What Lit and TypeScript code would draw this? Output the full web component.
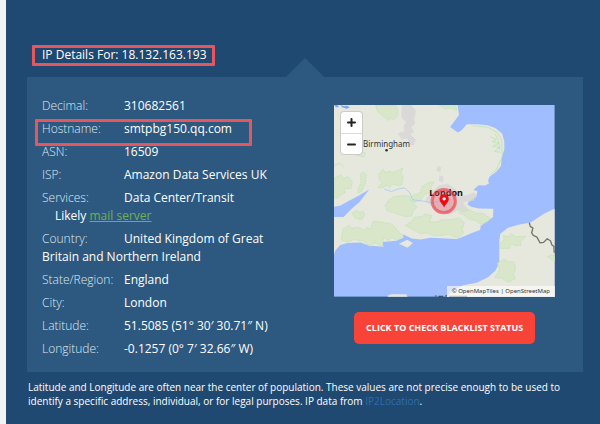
import { LitElement, html, css, svg, nothing } from "lit";
import { customElement } from "lit/decorators.js";

interface Detail {
  label: string;
  value: string;
  note?: boolean;
  marked?: boolean;
}

const details: Detail[] = [
  { label: "Decimal:", value: "310682561" },
  { label: "Hostname:", value: "smtpbg150.qq.com", marked: true },
  { label: "ASN:", value: "16509" },
  { label: "ISP:", value: "Amazon Data Services UK" },
  { label: "Services:", value: "Data Center/Transit", note: true },
  { label: "Country:", value: "United Kingdom of Great Britain and Northern Ireland" },
  { label: "State/Region:", value: "England" },
  { label: "City:", value: "London" },
  { label: "Latitude:", value: "51.5085 (51° 30′ 30.71″ N)" },
  { label: "Longitude:", value: "-0.1257 (0° 7′ 32.66″ W)" },
];

const woods = [
  "M137 15 L141 32 L155 45 L165 52 L176 62 L184 54 L190 60 L203 48 L204 32 L198 15Z",
  "M328 15 L345 27 L362 24 L381 31 L378 15Z",
  "M147 222 L160 208 L166 219 L181 213 L187 219 L219 205 L212 222 L220 229 L216 253 L204 257 L190 252 L180 263 L172 256 L157 264 L145 263 L156 248 L147 238Z",
  "M92 222 L101 217 L109 224 L107 246 L96 273 L85 280 L84 266 L93 250Z",
  "M12 236 L33 224 L40 236 L54 230 L67 246 L63 265 L43 267 L46 279 L33 285 L22 293 L12 297Z",
  "M166 317 L174 303 L192 290 L225 287 L252 294 L261 303 L247 310 L263 322 L250 333 L246 349 L225 350 L195 340 L172 333Z",
  "M240 300 L248 287 L270 280 L278 259 L302 246 L313 247 L303 263 L307 273 L284 285 L272 301 L257 307Z",
  "M226 377 L246 366 L253 353 L278 350 L284 342 L306 348 L298 366 L320 367 L336 360 L364 359 L389 355 L404 370 L397 390 L402 399 L385 414 L355 404 L317 409 L291 400 L271 402 L251 390Z",
  "M383 325 L398 336 L418 330 L444 342 L456 339 L481 355 L474 365 L454 374 L438 362 L417 358 L403 345 L390 341Z",
  "M35 408 L39 388 L58 377 L64 386 L84 382 L101 391 L112 383 L121 389 L131 364 L154 367 L183 372 L197 383 L207 397 L220 409 L204 421 L183 413 L176 423 L161 412 L157 441 L133 428 L125 440 L116 437 L100 424 L72 419 L54 427 L35 421Z",
  "M66 341 L80 331 L90 338 L99 334 L104 345 L95 359 L77 356Z",
  "M512 430 L523 421 L521 407 L535 412 L546 402 L558 411 L589 410 L572 425 L574 437 L556 438 L545 432 L539 446 L513 446Z",
  "M503 491 L523 478 L538 487 L553 486 L558 510 L551 523 L557 537 L536 547 L515 536 L495 533 L510 512Z",
  "M653 471 L664 466 L675 468 L675 483 L664 478Z",
];

const urban = [
  "M216 15 L244 15 L259 32 L253 55 L256 72 L244 81 L252 96 L241 104 L258 119 L252 137 L240 135 L232 116 L216 119 L203 101 L224 94 L221 77 L229 67 L214 52Z",
  "M324 198 L334 202 L332 217 L320 213Z M329 226 L342 231 L339 248 L327 243Z",
  "M285 304 L302 279 L328 256 L354 252 L378 268 L389 291 L415 285 L432 278 L442 287 L431 303 L401 307 L405 316 L421 334 L404 344 L390 329 L360 344 L319 336 L301 314Z",
];

const map = svg`
  <rect x="12" y="15" width="663" height="576" fill="#9fbdff"/>
  <g fill="#e6e8de">
    <path d="M12 15 H383 L388 45 L361 81 L384 98 L395 92 L411 73 L441 73 L474 76 L498 85 L517 101 L524 124 L524 149 L516 173 L514 198 L500 216 L480 230 L475 242 L478 250 L467 257 L447 256 L431 270 L443 274 L440 289 L417 306 L413 314 L424 321 L448 326 L491 327 L490 352 L453 379 L451 391 L430 398 L407 408 L382 418 L302 414 L272 419 L246 416 L220 404 L220 414 L200 423 L157 427 L161 441 L115 437 L92 428 L52 430 L31 436 L16 452 L12 466 V352 L41 352 L66 326 L88 307 L118 269 L86 288 L60 301 L30 318 L12 321Z"/>
    <path d="M207 432 L232 420 L249 430 L233 444Z"/>
    <path d="M675 327 L643 342 L603 368 L566 375 L535 384 L512 402 L509 421 L509 489 L497 513 L475 533 L441 549 L400 557 L372 570 L350 591 H675Z"/>
    <path d="M173 588 L183 584 L229 584 L233 591 H174Z"/>
  </g>
  <g fill="#d7d5d6" opacity="0.75">${urban.map((d) => svg`<path d=${d}/>`)}</g>
  <g fill="#d9e6ca" stroke="#b9e3ad" stroke-width="2" stroke-dasharray="7 2">
    ${woods.map((d) => svg`<path d=${d}/>`)}
  </g>
  <g fill="none" stroke="#afe3a4" stroke-width="2">
    <path d="M430 77 L475 82 L503 98 L516 120 L518 170 L500 210 L483 223 M482 110 L500 119 L488 125 L508 130 L489 139 L510 143 L494 155 L513 157 M496 101 L505 119 L511 151 M12 197 L30 190 L42 203 M57 140 L66 155 L87 151 L107 160 L101 170 L78 165"/>
  </g>
  <path d="M163 268 L185 275 L206 267 L224 264 L239 278 L249 300 L281 304 L305 309 L330 304" fill="none" stroke="#b6cdf3" stroke-width="3"/>
  <path d="M31 15 L43 19 L51 17 L60 22 L50 26 L36 22Z M12 15 H21 L28 21 L18 22Z" fill="#82a0f5"/>
  <path d="M599 369 L602 380 L610 385 L606 399 L611 407 L622 412 L631 429 L642 428 L653 417 L663 424 L667 436 L673 440 L674 459" fill="none" stroke="#73746f" stroke-width="4" stroke-linejoin="round"/>
  <circle cx="170" cy="151" r="4" fill="#333"/>
  <path d="M318 587 V591 M326 590 H340 M349 586 V591 M358 590 H412" stroke="#333a55" stroke-width="3"/>
`;

const pin = svg`
  <circle cx="342" cy="304" r="35" fill="#f5505f" fill-opacity="0.3" stroke="#f03a44" stroke-opacity="0.62" stroke-width="9"/>
  <path d="M343 323 C339 314 329 308 329 297 A14 14 0 0 1 357 297 C357 308 347 314 343 323Z" fill="#f00a17"/>
  <circle cx="343" cy="297" r="5" fill="#fff"/>
`;

@customElement("location-map")
export class LocationMap extends LitElement {
  static styles = css`
    :host {
      display: block;
      position: relative;
      overflow: hidden;
      font-family: "Noto Sans", "Open Sans", sans-serif;
      color: #333;
    }
    svg {
      display: block;
      width: 100%;
    }
    .overlay {
      position: absolute;
      inset: 0;
    }
    .place {
      position: absolute;
      line-height: 12px;
    }
    .birmingham {
      left: 13%;
      top: 17%;
      font-size: 8px;
    }
    .london {
      left: 43%;
      top: 43%;
      color: #111;
      font-size: 9px;
      font-weight: 700;
    }
    .zoom {
      position: absolute;
      left: 7px;
      top: 7px;
      width: 21px;
      border-radius: 3px;
      background: #fff;
      box-shadow: 0 0 0 1px #0000001c;
    }
    .zoom button {
      display: grid;
      place-items: center;
      width: 100%;
      height: 21px;
      padding: 0;
      border: 0;
      background: none;
    }
    .zoom button + button {
      border-top: 1px solid #ddd;
    }
    .zoom svg {
      width: 9px;
      height: 9px;
    }
    .credit {
      position: absolute;
      right: 0;
      bottom: 0;
      padding: 0 5px;
      background: #ffffff9c;
      font-size: 6px;
      line-height: 11px;
      white-space: nowrap;
    }
    .credit a {
      color: inherit;
      text-decoration: none;
    }
  `;

  render() {
    return html`
      <svg viewBox="12 15 663 576" aria-hidden="true">${map}</svg>
      <span class="place birmingham">Birmingham</span>
      <span class="place london">London</span>
      <svg class="overlay" viewBox="12 15 663 576" aria-hidden="true">${pin}</svg>
      <div class="zoom">
        <button aria-label="Zoom in">
          <svg viewBox="0 0 9 9"><path d="M1 4.5H8M4.5 1V8" stroke="#222" stroke-width="2" stroke-linecap="round" /></svg>
        </button>
        <button aria-label="Zoom out">
          <svg viewBox="0 0 9 9"><path d="M1 4.5H8" stroke="#222" stroke-width="2" stroke-linecap="round" /></svg>
        </button>
      </div>
      <div class="credit"><a href="#">© OpenMapTiles</a> | <a href="#">OpenStreetMap</a></div>
    `;
  }
}

@customElement("app-root")
export class AppRoot extends LitElement {
  static styles = css`
    :host {
      display: block;
      box-sizing: border-box;
      min-height: 100vh;
      padding: 45px 17px 16px 21px;
      border-left: 6px solid #f0f2f5;
      background: #1f4971;
      color: #fff;
      font: 12px/18px "Open Sans", "Noto Sans", sans-serif;
    }
    h1 {
      position: relative;
      width: max-content;
      margin: 0 0 12px 15px;
      font-size: 12px;
      line-height: 20px;
      font-weight: 400;
    }
    .outline {
      position: absolute;
      border: 3px solid #e4575d;
      border-radius: 1px;
      pointer-events: none;
    }
    h1 .outline {
      inset: 0 -8px -1px -10px;
    }
    .panel {
      position: relative;
      display: grid;
      grid-template-columns: minmax(0, 1fr) 43%;
      column-gap: 40px;
      padding: 20px 28px 14px 15px;
      background: #2d5980;
    }
    .panel::before {
      content: "";
      position: absolute;
      left: 50%;
      bottom: 100%;
      margin-left: -19px;
      border: solid transparent;
      border-width: 0 19px 19px;
      border-bottom-color: #2d5980;
    }
    .list {
      display: grid;
      row-gap: 5px;
      margin: 0;
      padding: 0;
      list-style: none;
    }
    .list li {
      position: relative;
    }
    .label {
      display: inline-block;
      width: 82px;
      font-weight: 300;
      color: #dfe9f2;
    }
    .list .outline {
      inset: -1px 42px -8px -7px;
    }
    .note {
      padding-left: 13px;
    }
    .note a {
      color: #6fb14f;
    }
    .side {
      display: flex;
      flex-direction: column;
      align-items: center;
      gap: 15px;
      padding-top: 8px;
    }
    location-map {
      width: 100%;
    }
    .check {
      padding: 0 12px;
      border: 0;
      border-radius: 5px;
      background: #f84438;
      color: #fff;
      font: 700 9px/32px "Open Sans", sans-serif;
      white-space: nowrap;
    }
    .legal {
      margin: 8px 0 0 1px;
      font-size: 10px;
      line-height: 14px;
    }
    .legal a {
      color: #2f6cab;
      text-decoration: none;
    }
  `;

  render() {
    return html`
      <h1>IP Details For: 18.132.163.193<span class="outline"></span></h1>
      <section class="panel">
        <ul class="list">
          ${details.map(
            (d) => html`<li>
              <span class="label">${d.label}</span><span>${d.value}</span>
              ${d.note ? html`<div class="note">Likely <a href="#">mail server</a></div>` : nothing}
              ${d.marked ? html`<span class="outline"></span>` : nothing}
            </li>`
          )}
        </ul>
        <div class="side">
          <location-map></location-map>
          <button class="check">CLICK TO CHECK BLACKLIST STATUS</button>
        </div>
      </section>
      <p class="legal">
        Latitude and Longitude are often near the center of population. These values are not precise enough to be
        used to identify a specific address, individual, or for legal purposes. IP data from
        <a href="#">IP2Location</a>.
      </p>
    `;
  }
}
